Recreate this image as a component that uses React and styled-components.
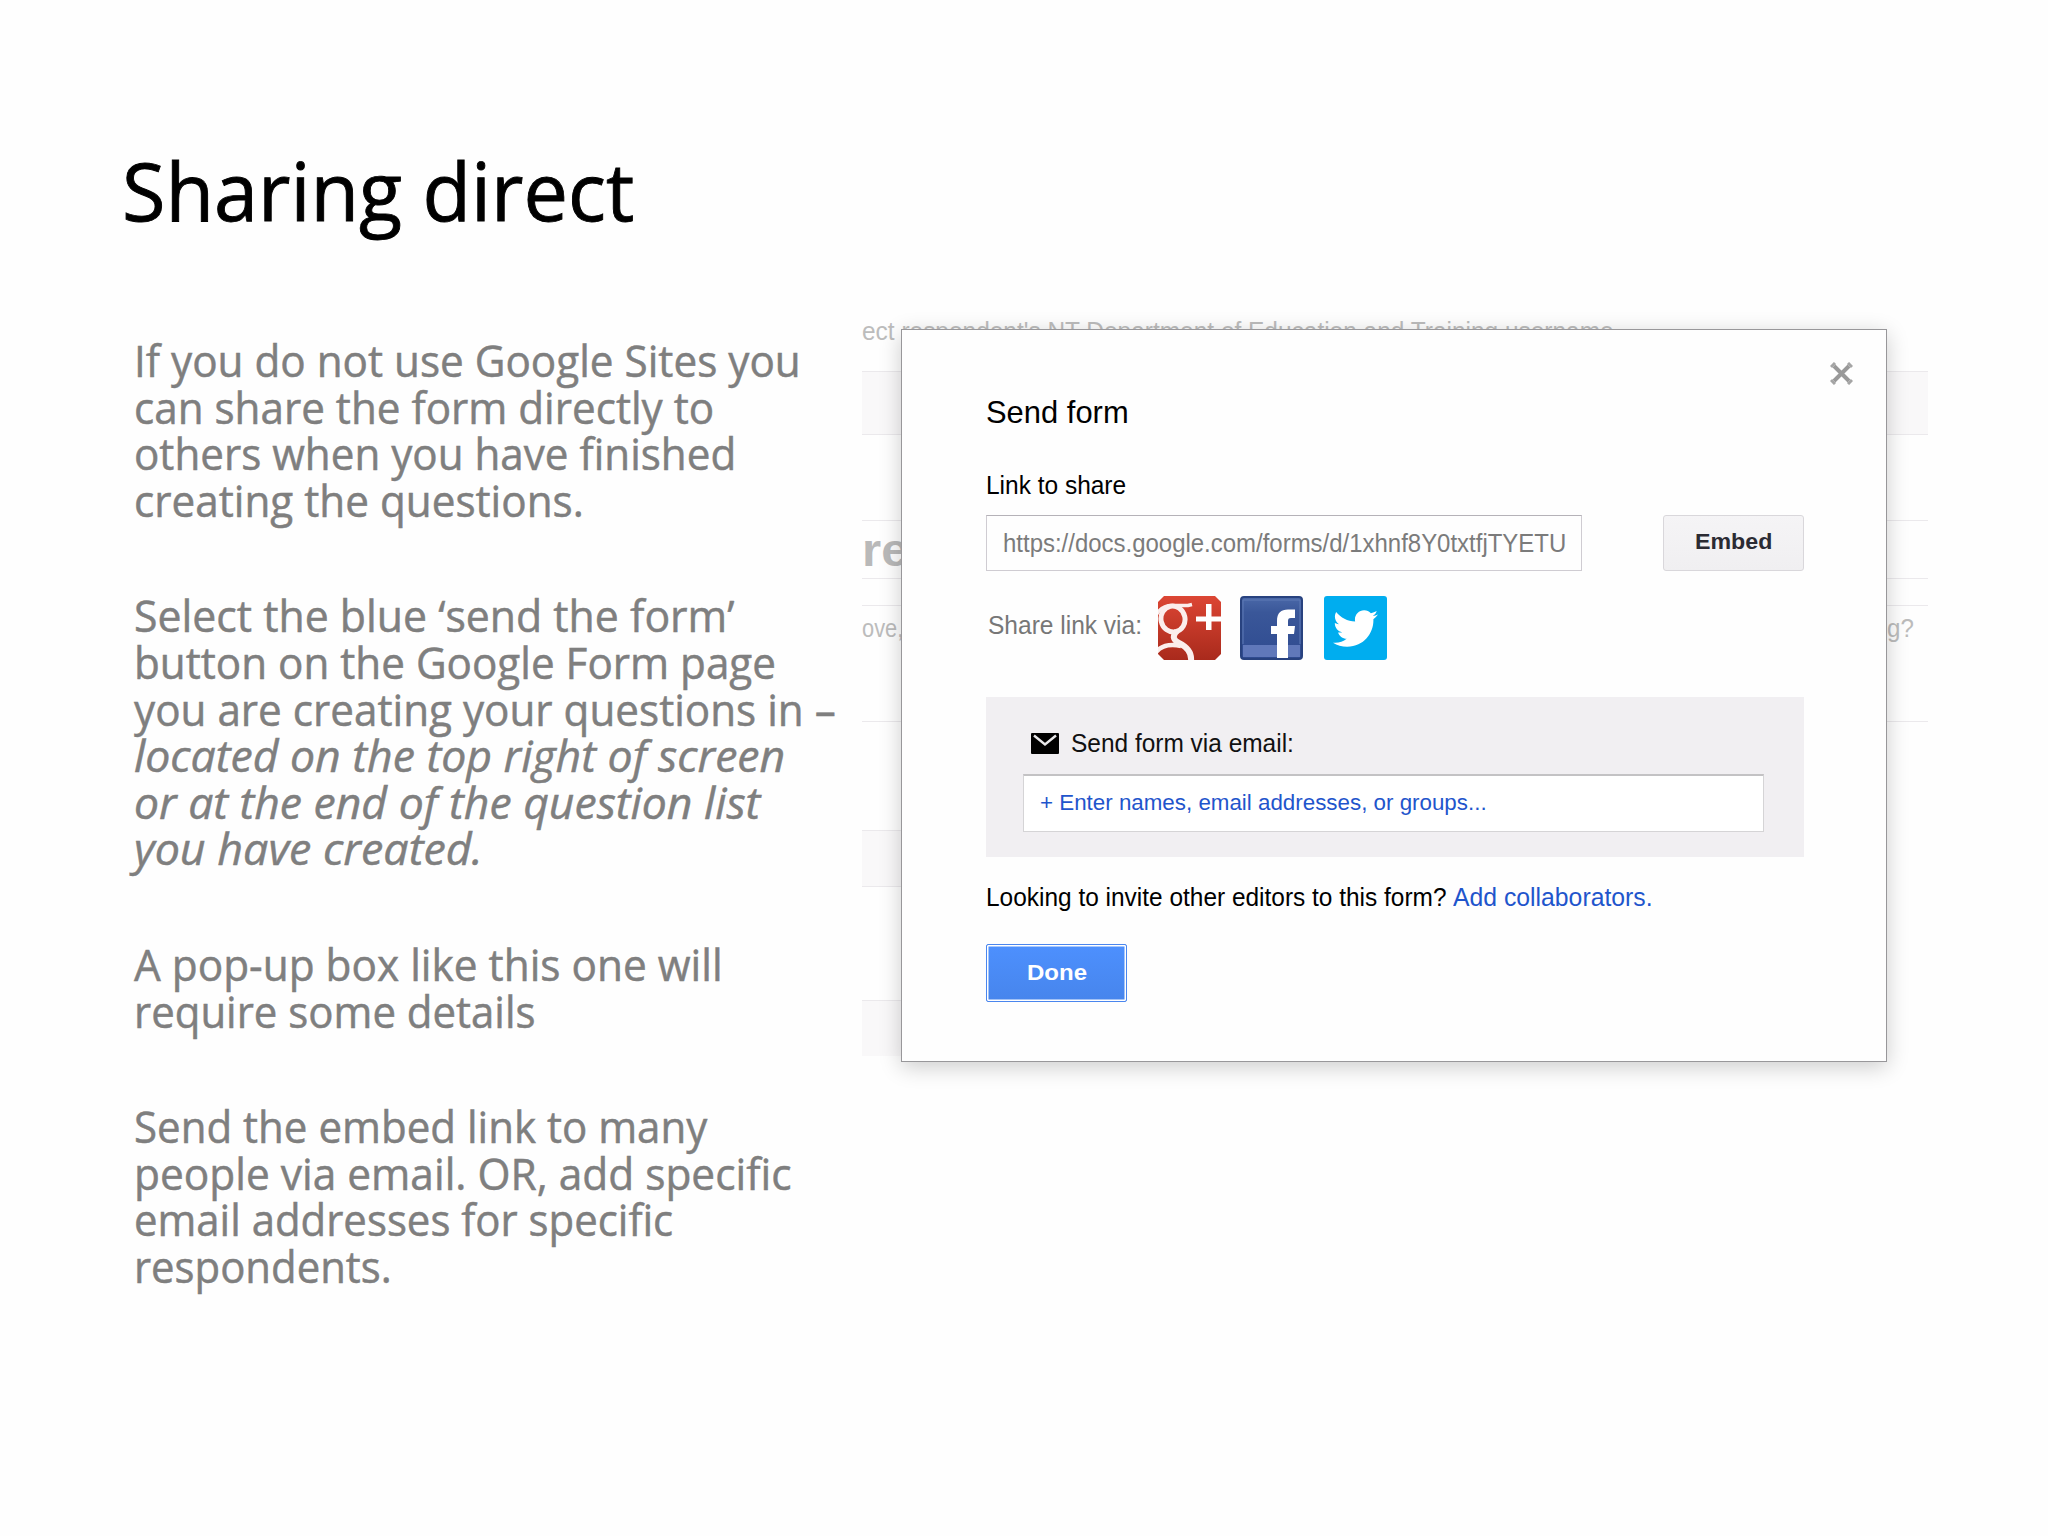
import { useLayoutEffect, useRef, useState } from 'react';
import styled, { createGlobalStyle, css } from 'styled-components';
import { FaTwitter } from 'react-icons/fa';

const GlobalStyle = createGlobalStyle`
    * {
        box-sizing: border-box;
    }

    body {
        margin: 0;
        background: #fefefe;
    }
`;

const Slide = styled.main`
    width: 2048px;
    height: 1536px;
    padding: 142px 120px 0;
    overflow: hidden;
    background: #fefefe;
    font-family: 'Open Sans', 'Noto Sans', sans-serif;
`;

const SlideTitle = styled.h1`
    margin: 0 0 0 2px;
    font-size: 80px;
    font-weight: 400;
    line-height: 96px;
    color: #000;
    -webkit-text-stroke: 0.9px #000;
`;

const Columns = styled.div`
    display: flex;
    align-items: flex-start;
    margin-top: 80px;
`;

const TextColumn = styled.div`
    display: flex;
    flex-direction: column;
    gap: 68.9px;
    width: 742px;
    padding: 20.2px 0 0 14px;
    color: #7f7f7f;
    -webkit-text-stroke: 0.5px #7f7f7f;
`;

const Paragraph = styled.p`
    margin: 0;
    font-size: 43px;
    line-height: 46.6px;
`;

const Line = styled.span`
    display: block;
    height: 46.6px;
    font-style: ${({ $italic }) => ($italic ? 'italic' : 'normal')};
`;

const FitBox = styled.span`
    display: inline-block;
    width: ${({ $width }) => $width}px;
    text-align: left;
    white-space: nowrap;
    vertical-align: top;
`;

const FitInner = styled.span`
    display: inline-block;
    transform-origin: left center;
`;

const Capture = styled.section`
    position: relative;
    width: 1066px;
    height: 770px;
    font-family: 'Liberation Sans', Arial, sans-serif;
`;

const Page = styled.div`
    display: flex;
    flex-direction: column;
    width: 1066px;
    height: 738px;
    overflow: hidden;
`;

const PageRow = styled.div`
    flex: none;
    display: flex;
    justify-content: space-between;
    align-items: center;
    width: ${({ $short }) => ($short ? '45px' : '100%')};
    height: ${({ $height }) => $height}px;
    overflow: hidden;
    font-size: 25px;
    color: #bcbcbc;
    ${({ $line }) => $line && css`border-top: 1px solid #ebe9ec;`}
    ${({ $band }) => $band && css`background: #f9f8f9;`}
    ${({ $strong }) => $strong && css`
        font-size: 46px;
        font-weight: 700;
        color: #b9b9b9;
    `}
`;

const PageHint = styled(PageRow)`
    align-items: flex-start;
    line-height: 26px;
`;

const QuestionRow = styled(PageRow)`
    padding: 0 14px 2px 0;
`;

const Dialog = styled.div`
    position: absolute;
    top: 11px;
    left: 39px;
    width: 986px;
    height: 733px;
    padding: 62px 82px 0 84px;
    border: 1px solid #98979a;
    background: #fefefe;
    box-shadow: 0 5px 21px rgba(0, 0, 0, 0.2);
    color: #000;
`;

const CloseButton = styled.button`
    position: absolute;
    top: 32px;
    right: 33px;
    padding: 0;
    border: 0;
    background: none;
    line-height: 0;
`;

const DialogTitle = styled.h2`
    margin: 0 0 38px;
    font-size: 32px;
    font-weight: 400;
    line-height: 40px;
`;

const Label = styled.div`
    font-size: 25px;
    line-height: 30px;
`;

const LinkRow = styled.div`
    display: flex;
    justify-content: space-between;
    margin-top: 15px;
`;

const LinkField = styled.div`
    width: 596px;
    height: 56px;
    padding: 0 16px;
    border: 1px solid #cfccd2;
    border-top-color: #b5b2b8;
    font-size: 26px;
    line-height: 54px;
    color: #7b7b7b;
`;

const EmbedButton = styled.button`
    display: flex;
    justify-content: center;
    align-items: center;
    width: 141px;
    height: 56px;
    padding: 0 0 3px;
    border: 1px solid #d9d7db;
    border-radius: 3px;
    background: linear-gradient(#f5f4f6, #f0eff1);
    font: 700 22px 'Liberation Sans', Arial, sans-serif;
    color: #2b2b33;
`;

const ShareRow = styled.div`
    display: flex;
    align-items: center;
    height: 64px;
    margin-top: 25px;
    font-size: 25px;
    color: #777;
`;

const ShareLabel = styled.span`
    width: 172px;
    padding: 0 0 6px 2px;
`;

const ShareIcons = styled.div`
    display: flex;
    gap: 19px;
`;

const TwitterTile = styled.div`
    display: grid;
    place-items: center;
    width: 63px;
    height: 64px;
    margin-left: 2px;
    border-radius: 3px;
    background: #00adef;
    color: #fff;
`;

const EmailPanel = styled.div`
    height: 160px;
    margin-top: 37px;
    padding: 31px 40px 0 37px;
    background: #f1eff2;
`;

const EmailHeading = styled.div`
    display: flex;
    align-items: center;
    gap: 12px;
    height: 30px;
    padding-left: 8px;
    font-size: 25px;
    line-height: 30px;
    color: #111;
`;

const EmailField = styled.div`
    height: 58px;
    margin-top: 16px;
    padding: 0 16px;
    border: 1px solid #d5d4d6;
    border-top: 2px solid #c3c2c4;
    background: #fff;
    font-size: 22px;
    line-height: 54px;
    color: #1f55cc;
`;

const InviteRow = styled.div`
    display: flex;
    gap: 6px;
    margin-top: 24.5px;
    font-size: 25.5px;
    line-height: 30px;
`;

const InviteLink = styled.a`
    color: #1f55cc;
    text-decoration: none;
`;

const DoneButton = styled.button`
    display: flex;
    justify-content: center;
    align-items: center;
    width: 141px;
    height: 58px;
    margin-top: 32.5px;
    padding: 0 0 1px;
    border: 1px solid #4a86ee;
    border-radius: 2px;
    background: linear-gradient(#4d90fe, #4785ec);
    box-shadow: inset 0 0 0 1.5px #fff;
    font: 700 22px 'Liberation Sans', Arial, sans-serif;
    color: #fff;
`;

// Squeezes or stretches a run of text so that it takes exactly `width` pixels
const FitText = ({ width, children }) => {
    const ref = useRef(null);
    const [scale, setScale] = useState(1);

    useLayoutEffect(() => {
        setScale(width / ref.current.offsetWidth);
    }, [width]);

    return (
        <FitBox $width={width}>
            <FitInner ref={ref} style={{ transform: `scaleX(${scale})` }}>{children}</FitInner>
        </FitBox>
    );
};

const GooglePlusIcon = () => (
    <svg width="63" height="64" viewBox="0 0 63 64">
        <defs>
            <linearGradient id="gplus" x1="0" y1="0" x2="0" y2="1">
                <stop offset="0" stopColor="#dc4634" />
                <stop offset="1" stopColor="#a92a1c" />
            </linearGradient>
            <clipPath id="gplusClip">
                <path d="M6 0H57L63 6V58L57 64H6L0 58V6Z" />
            </clipPath>
        </defs>
        <g clipPath="url(#gplusClip)">
            <rect width="63" height="64" fill="url(#gplus)" />
            <g fill="none" stroke="#fbeeec">
                <ellipse cx="15" cy="23" rx="12" ry="13" strokeWidth="5" transform="rotate(-12 15 23)" />
                <path d="M-1 18C3 11 8 9.500 14 9.500H30L34 8.500" strokeWidth="3.500" />
                <path d="M19 35C14 40 15 44 21 47C29 51 34 56 33 65" strokeWidth="6" />
                <path d="M-2 56C4 49 13 48 23 50" strokeWidth="4.500" />
            </g>
            <path d="M48 8H53.500V20.500H64V25.500H53.500V34H48V25.500H38V20.500H48Z" fill="#fff" />
        </g>
    </svg>
);

const FacebookIcon = () => (
    <svg width="63" height="64" viewBox="0 0 63 64">
        <defs>
            <linearGradient id="fb" x1="0" y1="0" x2="0" y2="1">
                <stop offset="0" stopColor="#4a68a8" />
                <stop offset="0.25" stopColor="#3a5799" />
                <stop offset="1" stopColor="#2f4b90" />
            </linearGradient>
        </defs>
        <rect x="1" y="1" width="61" height="62" rx="3" fill="url(#fb)" stroke="#28427f" strokeWidth="2" />
        <path d="M3 49H60V61H3Z" fill="#6078ba" />
        <path d="M3 48V4H60V48" fill="none" stroke="#5f7bb5" strokeWidth="1" />
        <path d="M37 62V38H31V30H37V25C37 17 41 13.500 48 13.500H55V22H51C48.500 22 48 23 48 25.500V30H55L54 38H48V62Z" fill="#fff" />
    </svg>
);

const MailIcon = () => (
    <svg width="28" height="21" viewBox="0 0 28 21">
        <rect width="28" height="21" rx="1" fill="#000" />
        <path d="M3 2.500L14 11.500L25 2.500" fill="none" stroke="#e9e8ea" strokeWidth="2.400" />
    </svg>
);

const CloseIcon = () => (
    <svg width="23" height="23" viewBox="0 0 23 23">
        <path d="M4 4L19 19M19 4L4 19" stroke="#999" strokeWidth="4" />
        <path d="M1 5L5 1M18 1L22 5M1 18L5 22M22 18L18 22" stroke="#a5a5a5" strokeWidth="3" />
    </svg>
);

const paragraphs = [
    [
        { text: 'If you do not use Google Sites you', width: 667 },
        { text: 'can share the form directly to', width: 580 },
        { text: 'others when you have finished', width: 602 },
        { text: 'creating the questions.', width: 450 },
    ],
    [
        { text: 'Select the blue ‘send the form’', width: 600 },
        { text: 'button on the Google Form page', width: 642 },
        { text: 'you are creating your questions in –', width: 702 },
        { text: 'located on the top right of screen', width: 651, italic: true },
        { text: 'or at the end of the question list', width: 626, italic: true },
        { text: 'you have created.', width: 349, italic: true },
    ],
    [
        { text: 'A pop-up box like this one will', width: 589 },
        { text: 'require some details', width: 402 },
    ],
    [
        { text: 'Send the embed link to many', width: 573 },
        { text: 'people via email. OR, add specific', width: 658 },
        { text: 'email addresses for specific', width: 539 },
        { text: 'respondents.', width: 258 },
    ],
];

const FormPage = () => (
    <Page>
        <PageHint $height={53}>
            <FitText width={752}>ect respondent's NT Department of Education and Training username</FitText>
        </PageHint>
        <PageRow $height={63} $line $band />
        <PageRow $height={86} $line />
        <PageRow $height={58} $line $strong>
            <FitText width={46}>re</FitText>
        </PageRow>
        <PageRow $height={27} $line />
        <QuestionRow $height={48} $line>
            <FitText width={41}>ove,</FitText>
            <FitText width={27}>g?</FitText>
        </QuestionRow>
        <PageRow $height={68} />
        <PageRow $height={109} $line />
        <PageRow $height={56} $line $band $short />
        <PageRow $height={114} $line $short />
        <PageRow $height={57} $line $band $short />
    </Page>
);

const SendFormDialog = () => (
    <Dialog role="dialog">
        <CloseButton aria-label="Close"><CloseIcon /></CloseButton>
        <DialogTitle><FitText width={143}>Send form</FitText></DialogTitle>
        <Label><FitText width={140}>Link to share</FitText></Label>
        <LinkRow>
            <LinkField>
                <FitText width={563}>https://docs.google.com/forms/d/1xhnf8Y0txtfjTYETU</FitText>
            </LinkField>
            <EmbedButton><FitText width={77}>Embed</FitText></EmbedButton>
        </LinkRow>
        <ShareRow>
            <ShareLabel><FitText width={154}>Share link via:</FitText></ShareLabel>
            <ShareIcons>
                <GooglePlusIcon />
                <FacebookIcon />
                <TwitterTile><FaTwitter size={45} /></TwitterTile>
            </ShareIcons>
        </ShareRow>
        <EmailPanel>
            <EmailHeading>
                <MailIcon />
                <FitText width={223}>Send form via email:</FitText>
            </EmailHeading>
            <EmailField>
                <FitText width={447}>+ Enter names, email addresses, or groups...</FitText>
            </EmailField>
        </EmailPanel>
        <InviteRow>
            <FitText width={461}>Looking to invite other editors to this form?</FitText>
            <InviteLink><FitText width={200}>Add collaborators.</FitText></InviteLink>
        </InviteRow>
        <DoneButton><FitText width={60}>Done</FitText></DoneButton>
    </Dialog>
);

const App = () => (
    <>
        <GlobalStyle />
        <Slide>
            <SlideTitle><FitText width={512}>Sharing direct</FitText></SlideTitle>
            <Columns>
                <TextColumn>
                    {paragraphs.map((lines) => (
                        <Paragraph key={lines[0].text}>
                            {lines.map(({ text, width, italic }) => (
                                <Line key={text} $italic={italic}>
                                    <FitText width={width}>{text}</FitText>
                                </Line>
                            ))}
                        </Paragraph>
                    ))}
                </TextColumn>
                <Capture>
                    <FormPage />
                    <SendFormDialog />
                </Capture>
            </Columns>
        </Slide>
    </>
);

export default App;
